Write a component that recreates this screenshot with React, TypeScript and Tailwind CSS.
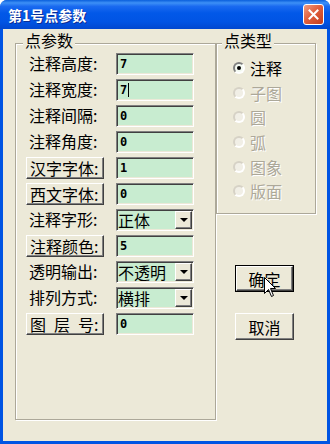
type RowDef = {
  kind: "label" | "button" | "select";
  label: string;
  value: string;
  caret?: boolean;
  spaced?: boolean;
};

const rows: RowDef[] = [
  { kind: "label", label: "注释高度", value: "7" },
  { kind: "label", label: "注释宽度", value: "7", caret: true },
  { kind: "label", label: "注释间隔", value: "0" },
  { kind: "label", label: "注释角度", value: "0" },
  { kind: "button", label: "汉字字体", value: "1" },
  { kind: "button", label: "西文字体", value: "0" },
  { kind: "select", label: "注释字形", value: "正体" },
  { kind: "button", label: "注释颜色", value: "5" },
  { kind: "select", label: "透明输出", value: "不透明" },
  { kind: "select", label: "排列方式", value: "横排" },
  { kind: "button", label: "图层号", value: "0", spaced: true },
];

const types = [
  { name: "注释", checked: true, enabled: true },
  { name: "子图" },
  { name: "圆" },
  { name: "弧" },
  { name: "图象" },
  { name: "版面" },
];

// classic sunken edit box, green like the original
const sunken =
  "border border-t-[#808080] border-l-[#808080] border-r-white border-b-white shadow-[inset_1px_1px_0_#404040,inset_-1px_-1px_0_#ece9d8]";
const raised =
  "border border-t-white border-l-white border-r-[#404040] border-b-[#404040] shadow-[inset_-1px_-1px_0_#808080]";

const LabelText = ({ row }: { row: RowDef }) => {
  if (row.spaced) {
    const chars = row.label.split("");
    return (
      <span className="flex">
        {chars.map((c, i) => (
          <span key={i} className={i < chars.length - 1 ? "mr-[8px]" : ""}>
            {c}
          </span>
        ))}
        <span>:</span>
      </span>
    );
  }
  return <span>{row.label}:</span>;
};

const Field = ({ row }: { row: RowDef }) => {
  if (row.kind === "select") {
    return (
      <div className={`flex w-[78px] h-[22px] bg-[#c8ecd0] ${sunken}`}>
        <div className="flex-1 pl-[1px] text-[16px] leading-[20px]">{row.value}</div>
        <div
          className={`w-[17px] h-[18px] mt-[1px] mr-[1px] bg-[#ece9d8] flex items-center justify-center ${raised}`}
        >
          <div className="w-0 h-0 border-l-[4px] border-r-[4px] border-t-[4px] border-l-transparent border-r-transparent border-t-black" />
        </div>
      </div>
    );
  }
  return (
    <div
      className={`flex items-center w-[78px] h-[22px] bg-[#c8ecd0] pl-[3px] ${sunken}`}
    >
      <span className="font-['DejaVu_Sans_Mono',monospace] font-bold text-[12px] leading-[14px]">
        {row.value}
      </span>
      {row.caret && <span className="w-px h-[14px] bg-black ml-[1px]" />}
    </div>
  );
};

const Radio = ({ checked, enabled }: { checked?: boolean; enabled?: boolean }) => (
  <div
    className={`w-[12px] h-[12px] rounded-full flex items-center justify-center border-2 ${
      enabled
        ? "border-t-[#808080] border-l-[#808080] border-r-white border-b-white bg-[#f4faf2]"
        : "border-t-[#d6d2c6] border-l-[#d6d2c6] border-r-white border-b-white bg-[#f1efe6]"
    }`}
  >
    {checked && <div className="w-[4px] h-[4px] rounded-full bg-black" />}
  </div>
);

export default function App() {
  return (
    <div className="relative w-[330px] h-[444px] overflow-hidden rounded-t-[7px] bg-[#0054e3] flex flex-col font-['Noto_Sans_CJK_SC','Noto_Sans_CJK_JP',sans-serif] text-black">
      {/* title bar */}
      <div className="h-[29px] shrink-0 flex items-center pl-[8px] pr-[6px] bg-[linear-gradient(to_bottom,#0a5fdc_0%,#3d90f6_10%,#1a6af0_22%,#0258e8_45%,#0154e4_75%,#0147cf_100%)]">
        <span className="text-white font-bold text-[14px] leading-[16px] [text-shadow:1px_1px_0_#0b2d94]">
          第1号点参数
        </span>
        <div className="ml-auto w-[21px] h-[21px] rounded-[3px] border border-white bg-[linear-gradient(135deg,#f09c82_0%,#e0603e_45%,#c53d1c_100%)] flex items-center justify-center">
          <svg width="11" height="11" viewBox="0 0 11 11">
            <path d="M1.5 1.5 L9.5 9.5 M9.5 1.5 L1.5 9.5" stroke="white" strokeWidth="2" strokeLinecap="square" />
          </svg>
        </div>
      </div>

      {/* body */}
      <div className="flex-1 mx-[3px] mb-[3px] bg-[#ece9d8] flex">
        {/* 点参数 */}
        <div className="relative ml-[12px] mt-[14px] w-[201px] h-[377px] border border-[#aca899] shadow-[inset_1px_1px_0_#fff,1px_1px_0_#fff]">
          <span className="absolute left-[7px] top-[-13px] px-[2px] bg-[#ece9d8] text-[16px] leading-[18px]">
            点参数
          </span>
          <div className="flex flex-col pt-[7px] pl-[10px]">
            {rows.map((row) => (
              <div key={row.label} className="flex items-center h-[26px]">
                <div className="w-[90px] text-[16px] leading-[18px]">
                  {row.kind === "button" ? (
                    <div className={`w-[78px] h-[22px] flex items-center pl-[3px] bg-[#ece9d8] ${raised}`}>
                      <LabelText row={row} />
                    </div>
                  ) : (
                    <div className="pl-[3px] pb-[2px]">
                      <LabelText row={row} />
                    </div>
                  )}
                </div>
                <Field row={row} />
              </div>
            ))}
          </div>
        </div>

        {/* right column */}
        <div className="flex flex-col">
          <div className="relative mt-[14px] w-[100px] h-[171px] border border-[#aca899] shadow-[inset_1px_1px_0_#fff,1px_1px_0_#fff]">
            <span className="absolute left-[5px] top-[-13px] px-[2px] bg-[#ece9d8] text-[16px] leading-[18px]">
              点类型
            </span>
            <div className="flex flex-col pt-[12px] pl-[16px]">
              {types.map((t) => (
                <div key={t.name} className="flex items-center gap-[5px] h-[24.6px]">
                  <Radio checked={t.checked} enabled={t.enabled} />
                  <span
                    className={`text-[16px] leading-[18px] ${
                      t.enabled ? "text-black" : "text-[#aca899] [text-shadow:1px_1px_0_#fff]"
                    }`}
                  >
                    {t.name}
                  </span>
                </div>
              ))}
            </div>
          </div>

          <div className="ml-[19px] mt-[51px] w-[59px] h-[27px] border border-black">
            <div className={`w-full h-full flex items-center justify-center text-[16px] leading-[18px] ${raised}`}>
              确定
            </div>
          </div>
          <div
            className={`ml-[19px] mt-[21px] w-[59px] h-[27px] flex items-center justify-center text-[16px] leading-[18px] ${raised}`}
          >
            取消
          </div>
        </div>
      </div>

      {/* mouse pointer over 确定 */}
      <svg className="absolute left-[264px] top-[277px]" width="13" height="21" viewBox="0 0 13 21">
        <path
          d="M0.5 0.5 L0.5 16.5 L4.5 12.5 L7.5 19.5 L9.5 18.5 L6.5 11.5 L11.5 11.5 Z"
          fill="white"
          stroke="black"
          strokeWidth="1"
          strokeLinejoin="miter"
        />
      </svg>
    </div>
  );
}
